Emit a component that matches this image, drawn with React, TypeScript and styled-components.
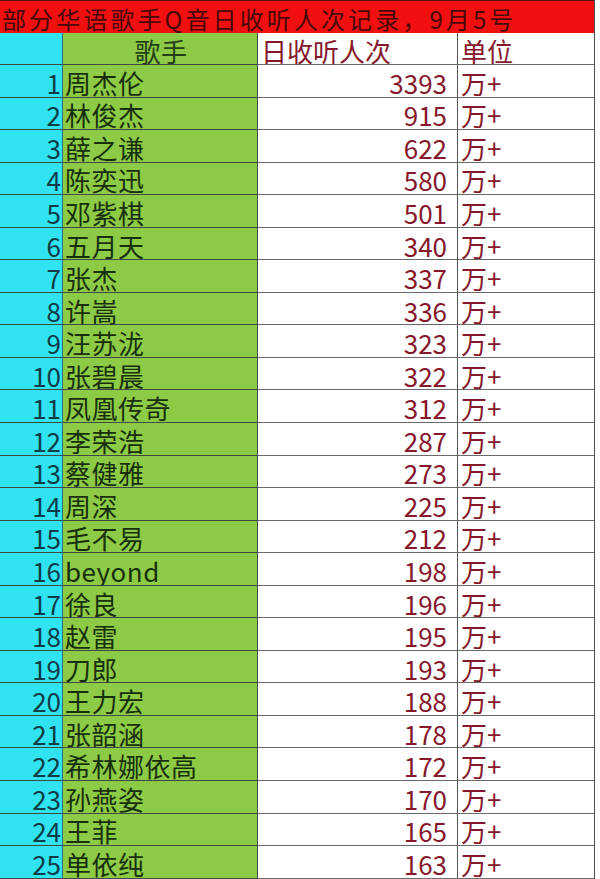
import React from 'react'
import styled, { createGlobalStyle } from 'styled-components'

type Row = {
  rank: number
  name: string
  count: number
}

const rows: Row[] = [
  { rank: 1, name: '周杰伦', count: 3393 },
  { rank: 2, name: '林俊杰', count: 915 },
  { rank: 3, name: '薛之谦', count: 622 },
  { rank: 4, name: '陈奕迅', count: 580 },
  { rank: 5, name: '邓紫棋', count: 501 },
  { rank: 6, name: '五月天', count: 340 },
  { rank: 7, name: '张杰', count: 337 },
  { rank: 8, name: '许嵩', count: 336 },
  { rank: 9, name: '汪苏泷', count: 323 },
  { rank: 10, name: '张碧晨', count: 322 },
  { rank: 11, name: '凤凰传奇', count: 312 },
  { rank: 12, name: '李荣浩', count: 287 },
  { rank: 13, name: '蔡健雅', count: 273 },
  { rank: 14, name: '周深', count: 225 },
  { rank: 15, name: '毛不易', count: 212 },
  { rank: 16, name: 'beyond', count: 198 },
  { rank: 17, name: '徐良', count: 196 },
  { rank: 18, name: '赵雷', count: 195 },
  { rank: 19, name: '刀郎', count: 193 },
  { rank: 20, name: '王力宏', count: 188 },
  { rank: 21, name: '张韶涵', count: 178 },
  { rank: 22, name: '希林娜依高', count: 172 },
  { rank: 23, name: '孙燕姿', count: 170 },
  { rank: 24, name: '王菲', count: 165 },
  { rank: 25, name: '单依纯', count: 163 },
]

const GlobalStyle = createGlobalStyle`
  html, body {
    margin: 0;
    padding: 0;
    background: #ffffff;
  }
  body {
    font-family: "Noto Sans CJK SC", "Noto Sans", sans-serif;
  }
`

export default function App() {
  return (
    <>
      <GlobalStyle />
      <Sheet>
        <Title>部分华语歌手Q音日收听人次记录，9月5号</Title>

        <IndexCell $header />
        <NameCell $header>歌手</NameCell>
        <CountCell $header>日收听人次</CountCell>
        <UnitCell $header>单位</UnitCell>

        {rows.map((row) => (
          <React.Fragment key={row.rank}>
            <IndexCell>{row.rank}</IndexCell>
            <NameCell>{row.name}</NameCell>
            <CountCell>{row.count}</CountCell>
            <UnitCell>万+</UnitCell>
          </React.Fragment>
        ))}
      </Sheet>
    </>
  )
}

// Inner Components

const Sheet = styled.div`
  display: grid;
  grid-template-columns: 63px 195px 200px 136px;
  grid-template-rows: 33px 32px;
  grid-auto-rows: 32.55px;
  width: 594px;
  border-right: 1.5px solid #4a4f4f;
`

const Title = styled.div`
  grid-column: 1 / -1;
  background: #f20f0f;
  color: #4a0808;
  font-size: 24px;
  letter-spacing: 3.1px;
  line-height: 33px;
  padding: 1px 0 0 2px;
  white-space: nowrap;
  border-top: 1.5px solid #5a1010;
  box-sizing: border-box;
`

const Cell = styled.div<{ $header?: boolean }>`
  box-sizing: border-box;
  display: flex;
  align-items: center;
  font-size: 26px;
  padding-top: 3px;
  white-space: nowrap;
  border-bottom: 1.5px solid #3f4a47;
  border-right: 1.5px solid #3f4a47;
`

const IndexCell = styled(Cell)`
  background: #31e3f0;
  color: #0c3d48;
  justify-content: flex-end;
  padding-right: 1px;
  border-right-color: #2b6f78;
`

const NameCell = styled(Cell)`
  background: #8dca46;
  color: ${({ $header }) => ($header ? '#234016' : '#17300c')};
  justify-content: ${({ $header }) => ($header ? 'center' : 'flex-start')};
  padding-left: 2px;
  letter-spacing: 0.5px;
`

const CountCell = styled(Cell)`
  background: #ffffff;
  color: #85182a;
  justify-content: ${({ $header }) => ($header ? 'flex-start' : 'flex-end')};
  padding-left: ${({ $header }) => ($header ? '3px' : '0')};
  padding-right: 10px;
  border-bottom-color: #6a6a6a;
  border-right-color: #555;
`

const UnitCell = styled(Cell)`
  background: #ffffff;
  color: #85182a;
  padding-left: 3px;
  border-bottom-color: #6a6a6a;
  border-right: none;
`
